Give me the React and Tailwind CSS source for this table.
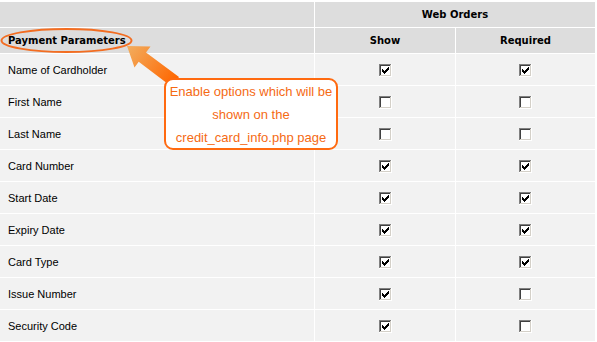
import React from 'react';

const rows = [
    ['Name of Cardholder', true, true],
    ['First Name', false, false],
    ['Last Name', false, false],
    ['Card Number', true, true],
    ['Start Date', true, true],
    ['Expiry Date', true, true],
    ['Card Type', true, true],
    ['Issue Number', true, false],
    ['Security Code', true, false],
];

// old-style sunken windows checkbox
function Check({ on }) {
    return (
        <svg width="13" height="13" viewBox="0 0 13 13" shapeRendering="crispEdges">
            <rect x="0" y="0" width="13" height="13" fill="#ffffff" />
            <rect x="0" y="0" width="12" height="12" fill="#808080" />
            <rect x="1" y="1" width="11" height="11" fill="#d4d0c8" />
            <rect x="1" y="1" width="10" height="10" fill="#404040" />
            <rect x="2" y="2" width="9" height="9" fill="#ffffff" />
            {on && (
                <g fill="#000000">
                    <rect x="3" y="5" width="1" height="3" />
                    <rect x="4" y="6" width="1" height="3" />
                    <rect x="5" y="7" width="1" height="3" />
                    <rect x="6" y="6" width="1" height="3" />
                    <rect x="7" y="5" width="1" height="3" />
                    <rect x="8" y="4" width="1" height="3" />
                    <rect x="9" y="3" width="1" height="3" />
                </g>
            )}
        </svg>
    );
}

export default function App() {
    const bold = "font-['DejaVu_Sans',sans-serif] font-bold text-[10px] text-black";

    return (
        <div className="relative w-[597px] h-[342px] bg-white pt-[2px] overflow-hidden font-['Liberation_Sans',Arial,sans-serif] text-[11px] text-black">
            <div className="grid grid-cols-[314px_140px_139px] gap-px">
                {/* Header rows */}
                <div className="h-[25px] bg-[#dddddd]" />
                <div className={`col-span-2 h-[25px] bg-[#dddddd] flex items-center justify-center ${bold}`}>
                    Web Orders
                </div>

                <div className={`h-[25px] bg-[#dddddd] flex items-center pl-2 ${bold}`}>
                    Payment Parameters
                </div>
                <div className={`h-[25px] bg-[#dddddd] flex items-center justify-center ${bold}`}>Show</div>
                <div className={`h-[25px] bg-[#dddddd] flex items-center justify-center ${bold}`}>Required</div>

                {/* Data rows */}
                {rows.map(([label, show, req]) => (
                    <React.Fragment key={label}>
                        <div className="h-[31px] bg-[#f2f2f2] flex items-center pl-2 pt-[2px]">{label}</div>
                        <div className="h-[31px] bg-[#f2f2f2] flex items-center justify-center pl-px pt-px">
                            <Check on={show} />
                        </div>
                        <div className="h-[31px] bg-[#f2f2f2] flex items-center justify-center pt-px">
                            <Check on={req} />
                        </div>
                    </React.Fragment>
                ))}
            </div>

            {/* annotation: ellipse + arrow */}
            <svg className="absolute left-0 top-0 pointer-events-none" width="597" height="342">
                <defs>
                    <linearGradient id="arr" x1="128" y1="46" x2="175" y2="82" gradientUnits="userSpaceOnUse">
                        <stop offset="0" stopColor="#f2ad5e" />
                        <stop offset="1" stopColor="#ff6600" />
                    </linearGradient>
                </defs>
                <ellipse cx="66.5" cy="40.5" rx="65" ry="11.5" fill="none" stroke="#f36d21" strokeWidth="2" />
                <polygon
                    points="127,46 150.5,46.5 146,52.5 179,77 172,87 138.7,61.8 134.5,67.5"
                    fill="url(#arr)"
                />
            </svg>

            {/* callout */}
            <div className="absolute left-[164px] top-[78px] w-[174px] h-[72px] rounded-[9px] border-2 border-[#ff6a10] bg-white flex flex-col items-center justify-center text-[13px] leading-[23px] text-[#f56a14]">
                <span>Enable options which will be</span>
                <span>shown on the</span>
                <span>credit_card_info.php page</span>
            </div>
        </div>
    );
}
